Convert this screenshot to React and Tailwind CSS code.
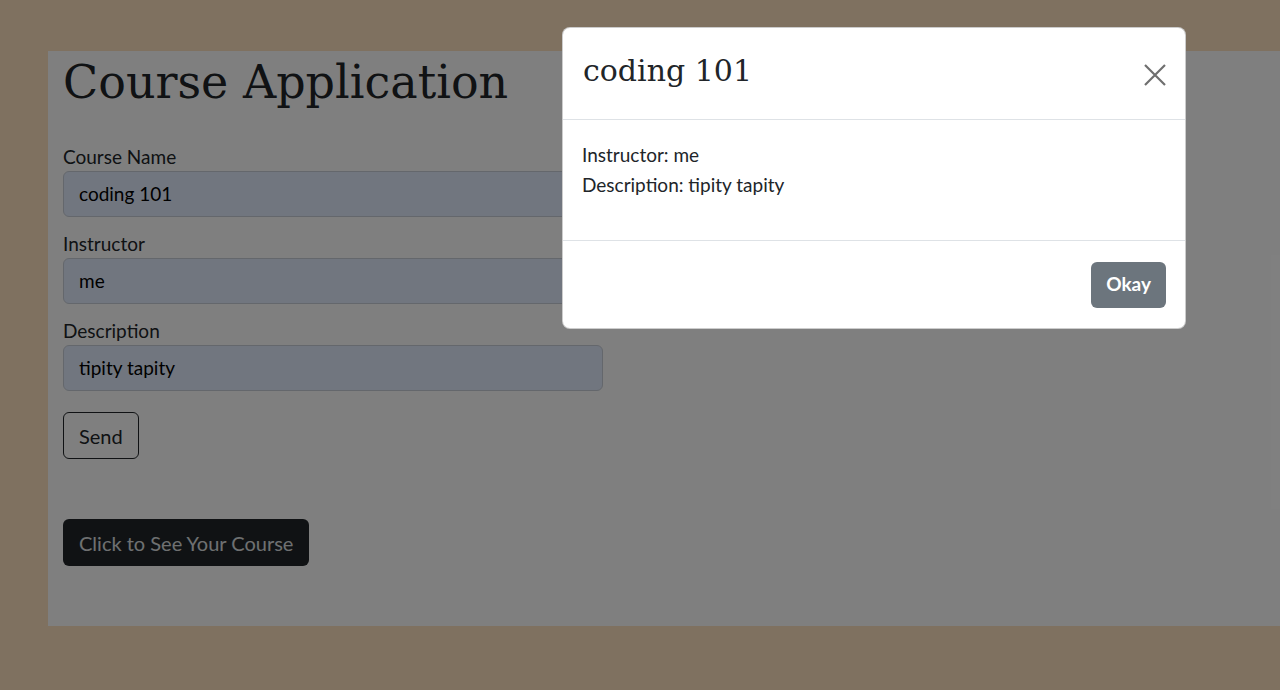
const sans = { fontFamily: 'Lato, "Noto Sans", sans-serif' };
const slab = { fontFamily: '"DejaVu Serif", "Liberation Serif", serif' };

function Field({ label, value }) {
  return (
    <div className="mb-[14px]">
      <label className="block text-[19px] leading-[26px] text-[#212529] mb-[1px]">{label}</label>
      <div className="w-[540px] h-[46px] rounded-[6px] border border-[#c9cfd8] bg-[#e2ecff] px-[15px] flex items-center text-[19px] text-black">
        {value}
      </div>
    </div>
  );
}

export default function App() {
  return (
    <div className="relative w-[1280px] h-[690px] overflow-hidden bg-[#ffe2c0]" style={sans}>
      {/* page */}
      <div className="pt-[51px] pl-[48px]">
        <div className="bg-white h-[575px] px-[15px] pt-[2px]">
          <h1 className="text-[46px] leading-[58px] text-[#212529] mb-[33px]" style={slab}>Course Application</h1>
          <Field label="Course Name" value="coding 101" />
          <Field label="Instructor" value="me" />
          <Field label="Description" value="tipity tapity" />
          <button className="mt-[7px] h-[47px] px-[15px] rounded-[6px] border border-[#212529] text-[20px] text-[#212529]">Send</button>
          <div className="mt-[60px]">
            <button className="h-[47px] px-[16px] rounded-[6px] bg-[#212529] text-[20px] text-[#dfe1e3]">Click to See Your Course</button>
          </div>
        </div>
      </div>

      {/* backdrop */}
      <div className="absolute inset-0 bg-black/50" />

      {/* modal */}
      <div className="absolute left-[562px] top-[27px] w-[624px] bg-white rounded-[8px] border border-black/20 flex flex-col">
        <div className="h-[92px] px-[20px] flex items-center justify-between border-b border-[#dee2e6]">
          <h2 className="text-[30px] leading-[40px] text-[#212529] -mt-[6px]" style={slab}>coding 101</h2>
          <svg width="22" height="22" viewBox="0 0 22 22" className="mr-[-1px] mt-[2px]">
            <path d="M1 1 L21 21 M21 1 L1 21" stroke="#6f6f6f" strokeWidth="2.2" fill="none" />
          </svg>
        </div>
        <div className="h-[121px] px-[19px] pt-[20px] text-[19px] leading-[30px] text-[#212529] border-b border-[#dee2e6]">
          <p>Instructor: me</p>
          <p>Description: tipity tapity</p>
        </div>
        <div className="h-[87px] px-[19px] flex items-center justify-end">
          <button className="h-[46px] px-[15px] rounded-[6px] bg-[#6c757d] text-white text-[19px] font-bold">Okay</button>
        </div>
      </div>
    </div>
  );
}
